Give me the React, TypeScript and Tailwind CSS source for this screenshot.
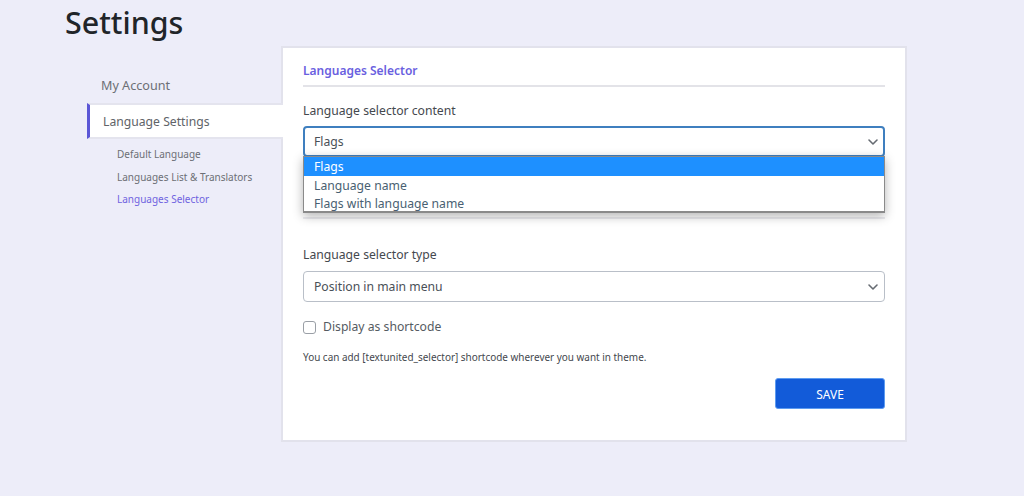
import { ChevronDown } from "lucide-react";

const font = "font-['Noto_Sans',sans-serif]";

function SelectBox({ value, active }: { value: string; active?: boolean }) {
  return (
    <div
      className={`flex h-[31px] items-center justify-between rounded-[4px] bg-white text-[12.2px] text-[#495057] ${
        active ? "border-2 border-[#3f7fbf] pl-[9px] pr-[2px]" : "border border-[#b9bfc8] pl-[10px] pr-[3px]"
      }`}
    >
      <span className="pt-[2px]">{value}</span>
      <ChevronDown className="h-[16px] w-[16px] text-[#666b72]" strokeWidth={2.4} />
    </div>
  );
}

export default function App() {
  return (
    <div className={`${font} h-[496px] w-[1024px] overflow-hidden bg-[#ededf9]`}>
      <h1 className="h-[46px] pl-[65px] pt-[3px] text-[30.4px] leading-[40px] font-medium text-[#212529]">
        Settings
      </h1>
      <div className="flex pl-[87px]">
        {/* sidebar */}
        <div className="relative z-20 w-[194px] pt-[22px]">
          <div className="h-[35px] pl-[14px] text-[12.6px] leading-[35px] text-[#6c6f75]">My Account</div>
          <div className="mr-[-2px] h-[36px] border-y-2 border-l-[3px] border-y-[#e4e4ee] border-l-[#5b56d6] bg-white pl-[13px] text-[12.2px] leading-[33px] text-[#606368]">
            Language Settings
          </div>
          <div className="flex flex-col gap-[5px] pl-[30px] pt-[7px] text-[10px] leading-[17.5px] text-[#6c6f75]">
            <div>Default Language</div>
            <div>Languages List &amp; Translators</div>
            <div className="text-[#6f63e0]">Languages Selector</div>
          </div>
        </div>
        {/* card */}
        <div className="relative z-10 h-[396px] w-[626px] border-2 border-[#e2e2ec] bg-white pl-[20px] pr-[20px]">
          <div className="h-[39px] border-b-2 border-[#e3e3e8] pt-[14px] text-[12px] leading-[18px] font-semibold text-[#6a5fe0]">
            Languages Selector
          </div>
          <div className="pt-[15px] text-[12.2px] leading-[18px] text-[#44484e]">Language selector content</div>
          <div className="relative mt-[6px]">
            <SelectBox value="Flags" active />
            <div className="absolute top-[30px] left-0 right-0 z-20 h-[57px] border border-[#8a8a8a] border-b-2 bg-white text-[12.2px] leading-[20px] text-[#495f72] shadow-[0_3px_10px_rgba(0,0,0,0.3)]">
              <div className="h-[19px] bg-[#1e90ff] pl-[10px] text-white">Flags</div>
              <div className="h-[18px] pl-[10px]">Language name</div>
              <div className="h-[18px] pl-[10px]">Flags with language name</div>
            </div>
          </div>
          <div className="mt-[60px] h-[2px] bg-[#ececf0]" />
          <div className="pt-[27px] text-[12.2px] leading-[18px] text-[#44484e]">Language selector type</div>
          <div className="mt-[7px]">
            <SelectBox value="Position in main menu" />
          </div>
          <div className="flex items-center gap-[7px] pt-[16px] text-[12.2px] leading-[18px] text-[#555b62]">
            <span className="h-[13px] w-[13px] rounded-[3px] border border-[#9a9fa6] bg-white" />
            <span>Display as shortcode</span>
          </div>
          <div className="pt-[14px] text-[9.95px] leading-[14px] text-[#44484e]">
            You can add [textunited_selector] shortcode wherever you want in theme.
          </div>
          <div className="flex justify-end pt-[14px]">
            <button className="h-[31px] w-[110px] rounded-[3px] border border-[#5d9bf0] bg-[#125bd9] pt-[2px] text-[12px] text-white">
              SAVE
            </button>
          </div>
        </div>
      </div>
    </div>
  );
}
